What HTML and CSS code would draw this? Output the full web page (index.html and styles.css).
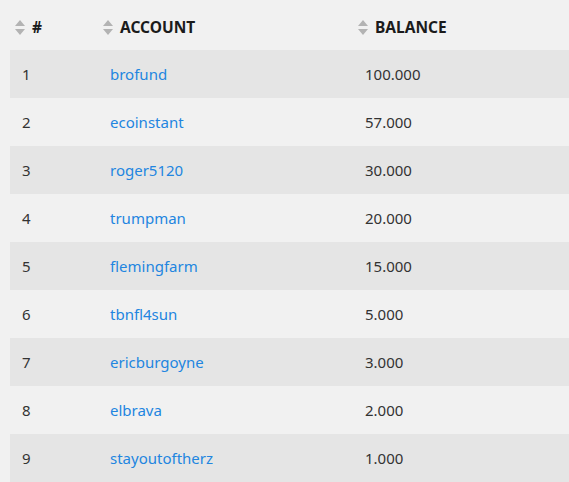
FILE: index.html
```html
<!DOCTYPE html>
<html>
<head>
<meta charset="utf-8">
<link rel="stylesheet" href="styles.css">
</head>
<body>
<table class="rich">
  <colgroup><col class="c1"><col class="c2"><col class="c3"></colgroup>
  <thead>
    <tr>
      <th><span class="sort"><svg width="10" height="15" viewBox="0 0 10 15"><path d="M5 0 L10 6 L0 6 Z M0 9 L10 9 L5 15 Z" fill="#b3b3b3"/></svg></span>#</th>
      <th><span class="sort"><svg width="10" height="15" viewBox="0 0 10 15"><path d="M5 0 L10 6 L0 6 Z M0 9 L10 9 L5 15 Z" fill="#b3b3b3"/></svg></span>ACCOUNT</th>
      <th><span class="sort"><svg width="10" height="15" viewBox="0 0 10 15"><path d="M5 0 L10 6 L0 6 Z M0 9 L10 9 L5 15 Z" fill="#b3b3b3"/></svg></span>BALANCE</th>
    </tr>
  </thead>
  <tbody>
    <tr><td>1</td><td><a href="#">brofund</a></td><td>100.000</td></tr>
    <tr><td>2</td><td><a href="#">ecoinstant</a></td><td>57.000</td></tr>
    <tr><td>3</td><td><a href="#">roger5120</a></td><td>30.000</td></tr>
    <tr><td>4</td><td><a href="#">trumpman</a></td><td>20.000</td></tr>
    <tr><td>5</td><td><a href="#">flemingfarm</a></td><td>15.000</td></tr>
    <tr><td>6</td><td><a href="#">tbnfl4sun</a></td><td>5.000</td></tr>
    <tr><td>7</td><td><a href="#">ericburgoyne</a></td><td>3.000</td></tr>
    <tr><td>8</td><td><a href="#">elbrava</a></td><td>2.000</td></tr>
    <tr><td>9</td><td><a href="#">stayoutoftherz</a></td><td>1.000</td></tr>
  </tbody>
</table>
</body>
</html>
```
FILE: styles.css
```css
html, body {
  margin: 0;
  padding: 0;
  background: #f1f1f1;
  overflow: hidden;
}
body {
  padding-left: 10px;
  font-family: "Noto Sans", "Open Sans", sans-serif;
  font-size: 15px;
  color: #333333;
}
.rich {
  border-collapse: collapse;
  width: 100%;
  table-layout: fixed;
}
.c1 { width: 88px; }
.c2 { width: 255px; }
th {
  height: 47px;
  padding: 3px 0 0 5px;
  text-align: left;
  font-weight: bold;
  font-size: 15.5px;
  color: #1b1b1b;
  vertical-align: middle;
}
.sort {
  display: inline-block;
  width: 17px;
  vertical-align: -2px;
}
.sort svg { display: block; }
td {
  height: 48px;
  padding: 0 0 0 12px;
  vertical-align: middle;
}
tbody tr:nth-child(odd) td {
  background: #e5e5e5;
}
a {
  color: #2285e0;
  text-decoration: none;
}
```
